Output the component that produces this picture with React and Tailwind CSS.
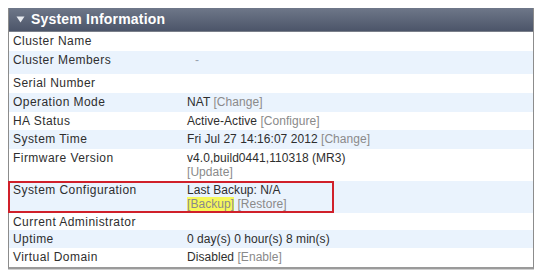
const rows = [
  { label: 'Cluster Name', h: 'h-[19px]' },
  { label: 'Cluster Members', h: 'h-[23px]', value: <span className="pl-[8px] text-gray-400">-</span> },
  { label: 'Serial Number', h: 'h-[19px]' },
  { label: 'Operation Mode', h: 'h-[19px]', value: <>NAT <Link>[Change]</Link></> },
  { label: 'HA Status', h: 'h-[18px]', value: <>Active-Active <Link>[Configure]</Link></> },
  { label: 'System Time', h: 'h-[19px]', value: <>Fri Jul 27 14:16:07 2012 <Link>[Change]</Link></> },
  { label: 'Firmware Version', h: 'h-[32px]', value: <>v4.0,build0441,110318 (MR3)<br /><Link>[Update]</Link></> },
  {
    label: 'System Configuration',
    h: 'h-[32px]',
    boxed: true,
    value: (
      <>
        Last Backup: N/A
        <br />
        <span className="bg-[#f6f85a] text-[#8a8a8a]">[Backup]</span> <Link>[Restore]</Link>
      </>
    ),
  },
  { label: 'Current Administrator', h: 'h-[17px]' },
  { label: 'Uptime', h: 'h-[18px]', value: '0 day(s) 0 hour(s) 8 min(s)' },
  { label: 'Virtual Domain', h: 'h-[19px]', value: <>Disabled <Link>[Enable]</Link></> },
];

function Link({ children }) {
  return <span className="text-[#8a8a8a]">{children}</span>;
}

export default function App() {
  return (
    <div className="w-[557px] h-[279px] bg-white pt-[8px] pl-[8px] font-['Liberation_Sans',sans-serif]">
      <div className="w-[526px] border-x border-[#8c8c8c] border-b-2 border-b-[#9a9a9a] shadow-[0_1px_0_#d0d0d0]">
        <div className="h-[24px] flex items-center gap-[6px] pl-[7px] bg-gradient-to-b from-[#6e7789] to-[#4c5569] border-b border-[#7a7f8a]">
          <svg width="9" height="7" viewBox="0 0 9 7">
            <path d="M0.5 0.5 H8.5 L4.5 6.5 Z" fill="#e8ebf0" />
          </svg>
          <span className="text-white font-bold text-[14px] tracking-[0.2px]">System Information</span>
        </div>
        {rows.map((r, i) => (
          <div
            key={r.label}
            className={`relative flex text-[12px] leading-[14px] text-[#2e2e2e] ${r.h} ${i % 2 === 1 ? 'bg-[#eaf3fd]' : 'bg-white'}`}
          >
            <div className="w-[178px] pl-[4px] pt-[2px] shrink-0 tracking-[0.45px]">{r.label}</div>
            <div className="pt-[2px] tracking-[0.05px]">{r.value}</div>
            {r.boxed && (
              <div className="absolute left-[-1px] top-0 w-[326px] h-full border-2 border-[#d0202a]" />
            )}
          </div>
        ))}
      </div>
    </div>
  );
}
